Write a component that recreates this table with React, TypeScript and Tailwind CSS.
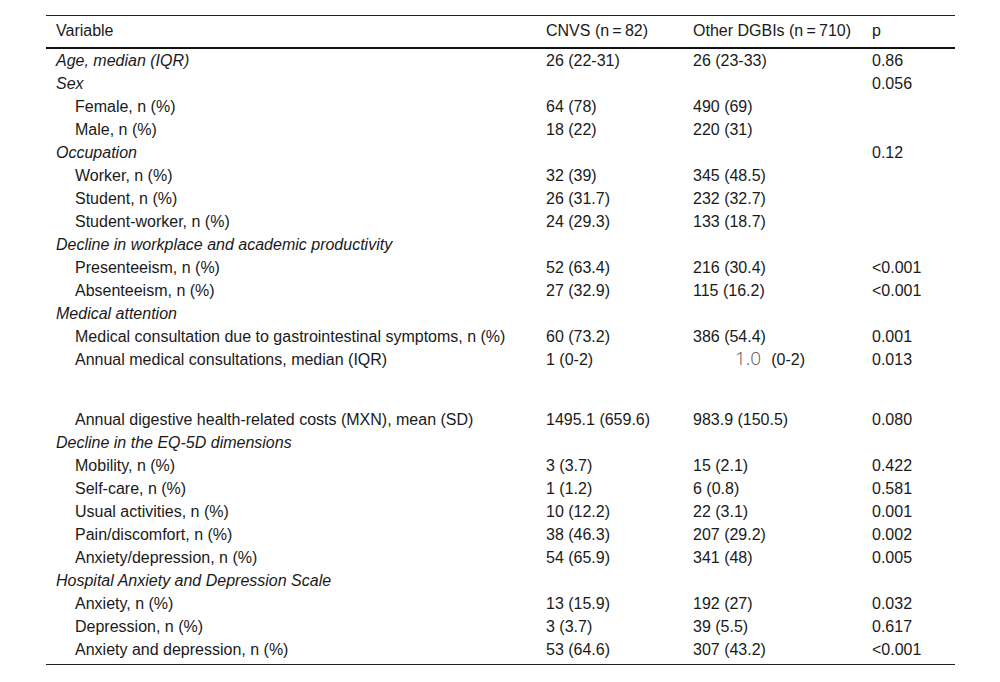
import React from 'react';

interface Row {
  label: string;
  cnvs?: string;
  other?: React.ReactNode;
  p?: string;
  group?: boolean;
  tall?: boolean;
}

const rows: Row[] = [
  { label: 'Age, median (IQR)', cnvs: '26 (22-31)', other: '26 (23-33)', p: '0.86', group: true },
  { label: 'Sex', p: '0.056', group: true },
  { label: 'Female, n (%)', cnvs: '64 (78)', other: '490 (69)' },
  { label: 'Male, n (%)', cnvs: '18 (22)', other: '220 (31)' },
  { label: 'Occupation', p: '0.12', group: true },
  { label: 'Worker, n (%)', cnvs: '32 (39)', other: '345 (48.5)' },
  { label: 'Student, n (%)', cnvs: '26 (31.7)', other: '232 (32.7)' },
  { label: 'Student-worker, n (%)', cnvs: '24 (29.3)', other: '133 (18.7)' },
  { label: 'Decline in workplace and academic productivity', group: true },
  { label: 'Presenteeism, n (%)', cnvs: '52 (63.4)', other: '216 (30.4)', p: '<0.001' },
  { label: 'Absenteeism, n (%)', cnvs: '27 (32.9)', other: '115 (16.2)', p: '<0.001' },
  { label: 'Medical attention', group: true },
  { label: 'Medical consultation due to gastrointestinal symptoms, n (%)', cnvs: '60 (73.2)', other: '386 (54.4)', p: '0.001' },
  {
    label: 'Annual medical consultations, median (IQR)',
    cnvs: '1 (0-2)',
    other: (
      <span>
        <span className="inline-block w-[42px]" />
        <span className="font-['Open_Sans',sans-serif] font-light text-[19px] leading-[18px] text-[#555]">1.0</span>
        <span className="ml-[10px]">(0-2)</span>
      </span>
    ),
    p: '0.013',
    tall: true,
  },
  { label: 'Annual digestive health-related costs (MXN), mean (SD)', cnvs: '1495.1 (659.6)', other: '983.9 (150.5)', p: '0.080' },
  { label: 'Decline in the EQ-5D dimensions', group: true },
  { label: 'Mobility, n (%)', cnvs: '3 (3.7)', other: '15 (2.1)', p: '0.422' },
  { label: 'Self-care, n (%)', cnvs: '1 (1.2)', other: '6 (0.8)', p: '0.581' },
  { label: 'Usual activities, n (%)', cnvs: '10 (12.2)', other: '22 (3.1)', p: '0.001' },
  { label: 'Pain/discomfort, n (%)', cnvs: '38 (46.3)', other: '207 (29.2)', p: '0.002' },
  { label: 'Anxiety/depression, n (%)', cnvs: '54 (65.9)', other: '341 (48)', p: '0.005' },
  { label: 'Hospital Anxiety and Depression Scale', group: true },
  { label: 'Anxiety, n (%)', cnvs: '13 (15.9)', other: '192 (27)', p: '0.032' },
  { label: 'Depression, n (%)', cnvs: '3 (3.7)', other: '39 (5.5)', p: '0.617' },
  { label: 'Anxiety and depression, n (%)', cnvs: '53 (64.6)', other: '307 (43.2)', p: '<0.001' },
];

export default function App() {
  return (
    <div className="w-[1000px] h-[682px] bg-white font-['Liberation_Sans',Arial,sans-serif] text-[16px] text-[#1a1a1a] pt-[15px] pl-[46px]">
      <table className="w-[909px] border-collapse table-fixed">
        <colgroup>
          <col className="w-[490px]" />
          <col className="w-[147px]" />
          <col className="w-[179px]" />
          <col className="w-[93px]" />
        </colgroup>
        <thead>
          <tr className="border-t border-[#222] border-b-2 border-b-[#111]">
            <th className="text-left font-normal pl-[10px] h-[32px] align-middle">Variable</th>
            <th className="text-left font-normal pl-[10px] align-middle">CNVS (n&#8201;=&#8201;82)</th>
            <th className="text-left font-normal pl-[10px] align-middle">Other DGBIs (n&#8201;=&#8201;710)</th>
            <th className="text-left font-normal pl-[10px] align-middle">p</th>
          </tr>
        </thead>
        <tbody className="border-b border-[#222]">
          {rows.map((r, i) => (
            <tr key={i} className={r.tall ? 'h-[60px]' : i === rows.length - 1 ? 'h-[27px]' : 'h-[23px]'}>
              <td className={`align-top leading-[23px] ${r.group ? 'italic pl-[10px]' : 'pl-[29px]'}`}>{r.label}</td>
              <td className="align-top leading-[23px] pl-[10px]">{r.cnvs}</td>
              <td className="align-top leading-[23px] pl-[10px]">{r.other}</td>
              <td className="align-top leading-[23px] pl-[10px]">{r.p}</td>
            </tr>
          ))}
        </tbody>
      </table>
    </div>
  );
}
